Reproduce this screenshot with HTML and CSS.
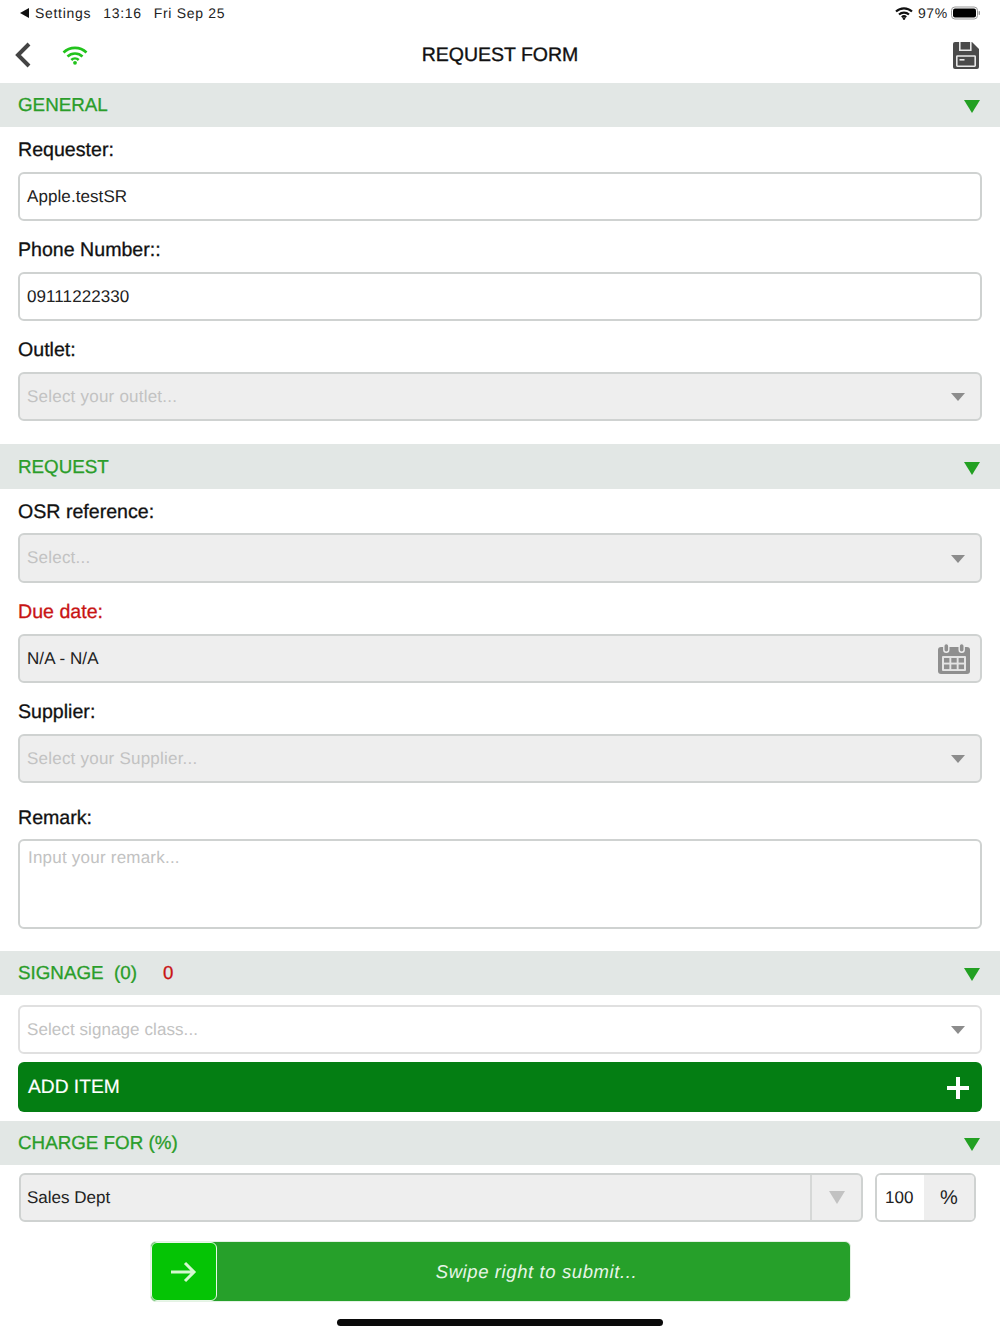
FILE: index.html
```html
<!DOCTYPE html>
<html lang="en">
<head>
<meta charset="utf-8">
<title>Request Form</title>
<link rel="stylesheet" href="styles.css">
</head>
<body>
<div class="page">
  <header class="status">
    <div class="status-left">
      <svg class="back-tri" viewBox="0 0 10 10"><path d="M0 5 9 0V10Z"/></svg>
      <span>Settings</span><span class="time">13:16</span><span>Fri Sep 25</span>
    </div>
    <div class="status-right">
      <svg class="st-wifi" viewBox="0 0 18 13"><path d="M1 4.6A11.5 11.5 0 0 1 17 4.6" /><path d="M4 7.6A7.2 7.2 0 0 1 14 7.6"/><path d="M6.8 10.2A3.2 3.2 0 0 1 11.2 10.2"/><circle cx="9" cy="11.6" r="1.3"/></svg>
      <span>97%</span>
      <svg class="battery" viewBox="0 0 30 14"><rect x=".5" y="1" width="26" height="12" rx="3.4" class="bat-out"/><rect x="2" y="2.5" width="23" height="9" rx="2" class="bat-in"/><rect x="27.6" y="5" width="1.4" height="4" rx=".7" class="bat-tip"/></svg>
    </div>
  </header>

  <nav class="nav">
    <div class="nav-left">
      <svg class="chev" viewBox="0 0 18 26"><path d="M15 2 4 13l11 11"/></svg>
      <svg class="nav-wifi" viewBox="0 0 26 19"><path d="M1.5 6.5a16.5 16.5 0 0 1 23 0"/><path d="M5.5 10.5a10.8 10.8 0 0 1 15 0"/><path d="M9.3 14a5.3 5.3 0 0 1 7.4 0"/><circle cx="13" cy="16.8" r="1.9"/></svg>
    </div>
    <h1 class="nav-title">REQUEST FORM</h1>
    <svg class="save" viewBox="0 0 26 27">
      <path d="M2 0H19L26 7V25a2 2 0 0 1-2 2H2a2 2 0 0 1-2-2V2A2 2 0 0 1 2 0Z"/>
      <path class="save-cut" d="M6.8 0V8.2H17.8V0"/>
      <rect class="save-bar" x="12.5" y="0" width="3" height="6"/>
      <rect class="save-cut" x="3.8" y="14" width="18.4" height="10.2" rx=".6"/>
      <rect class="save-slit" x="6.5" y="17" width="5" height="1.6"/>
    </svg>
  </nav>

  <section class="band"><h2>GENERAL</h2><span class="tri"></span></section>
  <div class="field"><label>Requester:</label><div class="box">Apple.testSR</div></div>
  <div class="field"><label>Phone Number::</label><div class="box">09111222330</div></div>
  <div class="field"><label>Outlet:</label><div class="box off ph">Select your outlet...<span class="caret"></span></div></div>

  <section class="band band-gap band-wide"><h2>REQUEST</h2><span class="tri"></span></section>
  <div class="field"><label class="short">OSR reference:</label><div class="box off ph tall">Select...<span class="caret"></span></div></div>
  <div class="field"><label class="req">Due date:</label><div class="box off">N/A - N/A
    <svg class="cal" viewBox="0 0 32 30">
      <path d="M3 3H29a3 3 0 0 1 3 3V27a3 3 0 0 1-3 3H3a3 3 0 0 1-3-3V6A3 3 0 0 1 3 3Z"/>
      <rect class="cal-ring" x="5.8" y="-.4" width="5" height="8.6" rx="2.5"/>
      <rect class="cal-ring" x="21.2" y="-.4" width="5" height="8.6" rx="2.5"/>
      <rect class="cal-panel" x="4" y="12" width="24" height="15" rx="1"/>
      <g class="cal-cells"><rect x="6" y="14" width="5.4" height="4.6"/><rect x="13.3" y="14" width="5.4" height="4.6"/><rect x="20.6" y="14" width="5.4" height="4.6"/><rect x="6" y="20.5" width="5.4" height="4.6"/><rect x="13.3" y="20.5" width="5.4" height="4.6"/><rect x="20.6" y="20.5" width="5.4" height="4.6"/></g>
    </svg>
  </div></div>
  <div class="field"><label>Supplier:</label><div class="box off ph">Select your Supplier...<span class="caret"></span></div></div>
  <div class="field field-remark"><label class="short">Remark:</label><div class="box area ph">Input your remark...</div></div>

  <section class="band band-gap-remark"><h2>SIGNAGE&nbsp; (0)</h2><span class="count">0</span><span class="tri"></span></section>
  <div class="signage">
    <div class="box ph light">Select signage class...<span class="caret"></span></div>
    <button class="add">ADD ITEM<svg class="plus" viewBox="0 0 24 24"><path d="M12 1V23M1 12H23"/></svg></button>
  </div>

  <section class="band"><h2>CHARGE FOR (%)</h2><span class="tri"></span></section>
  <div class="charge">
    <div class="dept"><span class="dept-name">Sales Dept</span><span class="dept-btn"><span class="dept-tri"></span></span></div>
    <div class="pct"><span class="pct-val">100</span><span class="pct-unit">%</span></div>
  </div>

  <div class="swipe">
    <div class="swipe-handle"><svg viewBox="0 0 28 22"><path d="M2 11H25M16 2l9 9-9 9"/></svg></div>
    <div class="swipe-text">Swipe right to submit...</div>
  </div>
  <div class="home"></div>
</div>
</body>
</html>
```
FILE: styles.css
```css
* { box-sizing: border-box; margin: 0; padding: 0; }
html, body { background: #fff; }
body { font-family: "Liberation Sans", Arial, sans-serif; color: #111; text-rendering: geometricPrecision; }
.page { width: 1000px; height: 1334px; overflow: hidden; }

.status { height: 27px; padding: 0 19px 1px 20px; display: flex; align-items: center; justify-content: space-between; font-size: 14px; letter-spacing: .7px; color: #222; }
.status-left { display: flex; align-items: center; gap: 12px; }
.back-tri { width: 10px; height: 10px; fill: #111; margin-right: -7px; }
.status-right { display: flex; align-items: center; gap: 3px; }
.st-wifi { width: 18px; height: 13px; fill: #111; margin-right: 2px; margin-left: -6px; }
.st-wifi path { fill: none; stroke: #111; stroke-width: 2.1; }
.battery { width: 30px; height: 14px; }
.bat-out { fill: none; stroke: #999; }
.bat-in { fill: #000; }
.bat-tip { fill: #999; }

.nav { height: 56px; padding: 0 21px 0 14px; display: flex; align-items: center; justify-content: space-between; position: relative; }
.nav-left { display: flex; align-items: center; gap: 30px; }
.chev { width: 18px; height: 26px; fill: none; stroke: #444; stroke-width: 4; }
.nav-wifi { width: 26px; height: 19px; fill: #22c31c; }
.nav-wifi path { fill: none; stroke: #22c31c; stroke-width: 2.6; }
.nav-title { position: absolute; left: 0; right: 0; text-align: center; font-size: 19.5px; font-weight: 400; color: #111; -webkit-text-stroke: .35px #111; }
.save { width: 26px; height: 27px; fill: #4a4a4a; }
.save-cut { fill: none; stroke: #e8e8e8; stroke-width: 1.6; }
.save-bar { fill: #4a4a4a; }
.save-slit { fill: #e8e8e8; }

.band { height: 44px; background: #e2e7e5; padding: 0 20.5px 0 18px; display: flex; align-items: center; color: #2a9d2a; }
.band h2 { font-size: 18.8px; font-weight: 400; -webkit-text-stroke: .3px #2a9d2a; }
.band-gap { margin-top: 17px; }
.band-wide { height: 45px; }
.band-gap-remark { margin-top: 22px; }
.tri { margin-left: auto; width: 0; height: 0; border-left: 8px solid transparent; border-right: 8px solid transparent; border-top: 13px solid #22a022; margin-top: 3px; }
.count { color: #c81414; font-size: 18.7px; margin-left: 26px; -webkit-text-stroke: .3px #c81414; }

.field { padding: 0 18px 6px; }
.field label { display: flex; align-items: center; height: 45px; padding-top: 2px; font-size: 19.6px; color: #111; -webkit-text-stroke: .3px #111; }
.field label.short { height: 44px; }
.field label.req { color: #c81414; -webkit-text-stroke: .3px #c81414; }
.field-remark { padding-bottom: 0; }
.field-remark label.short { margin-top: 6px; }

.box { height: 49px; border: 2px solid #cfd2d1; border-radius: 6px; background: #fff; padding: 0 7px; display: flex; align-items: center; justify-content: space-between; font-size: 17px; letter-spacing: .08px; color: #222; }
.tall { height: 50px; }
.off { background: #eeeeee; }
.ph { color: #c2c2c2; }
.off.ph, .area.ph { letter-spacing: .22px; }
.light { border-color: #e0e0e0; }
.area { height: 90px; align-items: flex-start; padding: 7px 8px; }
.caret { width: 0; height: 0; border-left: 7.5px solid transparent; border-right: 7.5px solid transparent; border-top: 8px solid #8c8c8c; margin-right: 8px; margin-top: 1px; }
.cal { width: 32px; height: 30px; fill: #8f8f8f; margin-right: 3px; overflow: visible; }
.cal-ring { fill: #8f8f8f; stroke: #eeeeee; stroke-width: 1.4; }
.cal-panel { fill: #e4e4e4; }
.cal-cells { fill: #8f8f8f; }

.signage { padding: 10px 18px 9px; display: flex; flex-direction: column; gap: 8px; }
.add { height: 50px; border: 0; border-radius: 6px; background: #047e13; color: #fff; font-family: "Liberation Sans", sans-serif; font-size: 19.2px; padding: 2px 12px 0 10px; display: flex; align-items: center; justify-content: space-between; -webkit-text-stroke: .2px #fff; text-rendering: geometricPrecision; }
.plus { width: 24px; height: 24px; fill: none; stroke: #fff; stroke-width: 4; }

.charge { padding: 8px 24px 0 19px; display: flex; justify-content: space-between; }
.dept { width: 844px; height: 49px; border: 2px solid #cfd2d1; border-radius: 6px; background: #eeeeee; display: flex; align-items: center; font-size: 17px; color: #222; }
.dept-name { flex: 1; padding-left: 6px; }
.dept-btn { width: 51px; height: 100%; border-left: 2px solid #d6d8d7; display: flex; align-items: center; justify-content: center; }
.dept-tri { width: 0; height: 0; border-left: 8px solid transparent; border-right: 8px solid transparent; border-top: 13px solid #c2c2c2; }
.pct { width: 101px; height: 49px; border: 2px solid #cfd2d1; border-radius: 6px; display: flex; overflow: hidden; font-size: 17px; color: #222; }
.pct-val { width: 47px; background: #fff; display: flex; align-items: center; padding-left: 8px; }
.pct-unit { flex: 1; background: #eeeeee; display: flex; align-items: center; justify-content: center; font-size: 20px; padding-top: 1px; }

.swipe { width: 701px; height: 61px; margin: 19px 0 0 150px; background: #26a02a; border: 1px solid #e4f2e4; border-radius: 6px; display: flex; }
.swipe-handle { width: 66px; height: 100%; background: #05c405; border: 1px solid #e8f8e8; border-radius: 6px; display: flex; align-items: center; justify-content: center; padding-right: 3px; }
.swipe-handle svg { width: 28px; height: 22px; fill: none; stroke: #d5f8d0; stroke-width: 3; }
.swipe-text { flex: 1; display: flex; align-items: center; justify-content: center; color: #e8f5e8; font-style: italic; font-size: 18.5px; letter-spacing: .6px; padding-left: 6px; }
.home { width: 326px; height: 7px; border-radius: 4px; background: #0a0a0a; margin: 17px auto 0; }
```
